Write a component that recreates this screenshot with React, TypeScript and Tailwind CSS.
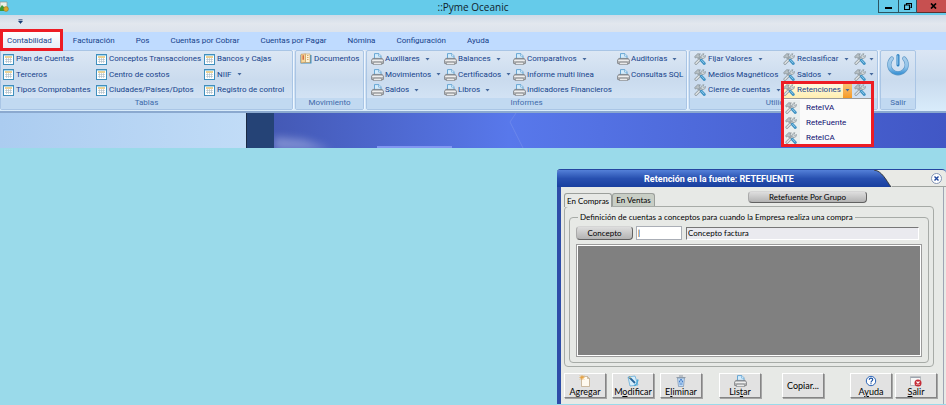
import type { ReactNode } from "react"
import clsx from "clsx"

type IconName = "table" | "printer" | "tools" | "book"

interface RibbonItem {
  label: string
  icon: IconName
  menu?: boolean
  open?: boolean
}

interface RibbonGroup {
  title: string
  width: string
  columns: string
  items: RibbonItem[]
}

const tabs = [
  "Contabilidad",
  "Facturación",
  "Pos",
  "Cuentas por Cobrar",
  "Cuentas por Pagar",
  "Nómina",
  "Configuración",
  "Ayuda",
]

// Items run down each column, three rows at a time
const groups: RibbonGroup[] = [
  {
    title: "Tablas",
    width: "w-[293px]",
    columns: "grid-cols-[93px_108px_88px] pl-[2px]",
    items: [
      { label: "Plan de Cuentas", icon: "table" },
      { label: "Terceros", icon: "table" },
      { label: "Tipos Comprobantes", icon: "table" },
      { label: "Conceptos Transacciones", icon: "table" },
      { label: "Centro de costos", icon: "table" },
      { label: "Ciudades/Países/Dptos", icon: "table" },
      { label: "Bancos y Cajas", icon: "table" },
      { label: "NIIF", icon: "table", menu: true },
      { label: "Registro de control", icon: "table" },
    ],
  },
  {
    title: "Movimiento",
    width: "w-[69px]",
    columns: "grid-cols-[63px] pl-1",
    items: [{ label: "Documentos", icon: "book" }],
  },
  {
    title: "Informes",
    width: "w-[321px]",
    columns: "grid-cols-[73px_69px_104px_68px] pl-1",
    items: [
      { label: "Auxiliares", icon: "printer", menu: true },
      { label: "Movimientos", icon: "printer", menu: true },
      { label: "Saldos", icon: "printer", menu: true },
      { label: "Balances", icon: "printer", menu: true },
      { label: "Certificados", icon: "printer", menu: true },
      { label: "Libros", icon: "printer", menu: true },
      { label: "Comparativos", icon: "printer", menu: true },
      { label: "Informe multi línea", icon: "printer" },
      { label: "Indicadores Financieros", icon: "printer" },
      { label: "Auditorías", icon: "printer", menu: true },
      { label: "Consultas SQL", icon: "printer" },
    ],
  },
  {
    title: "Utilidades",
    width: "w-[189px]",
    columns: "grid-cols-[89px_71px_23px] pl-1",
    items: [
      { label: "Fijar Valores", icon: "tools", menu: true },
      { label: "Medios Magnéticos", icon: "tools" },
      { label: "Cierre de cuentas", icon: "tools", menu: true },
      { label: "Reclasificar", icon: "tools", menu: true },
      { label: "Saldos", icon: "tools", menu: true },
      { label: "Retenciones", icon: "tools", menu: true, open: true },
      { label: "", icon: "tools", menu: true },
      { label: "", icon: "tools", menu: true },
      { label: "", icon: "tools" },
    ],
  },
]

const retenciones = ["ReteIVA", "ReteFuente", "ReteICA"]

function TableIcon() {
  return (
    <svg viewBox="0 0 11 11" className="h-[11px] w-[11px] shrink-0">
      <rect x="0.5" y="0.5" width="10" height="10" fill="#fff" stroke="#3f8fbd" />
      <rect x="1" y="1" width="9" height="1" fill="#a9d6ec" />
      <rect x="2" y="2" width="7" height="2" fill="#ecd294" />
      <path d="M2 5.500h7M2 7.500h7M3.500 4v5M5.500 4v5M7.500 4v5" stroke="#a9bac4" strokeWidth="0.6" />
    </svg>
  )
}

function PrinterIcon() {
  return (
    <svg viewBox="0 0 13 12" className="h-3 w-[13px] shrink-0">
      <path d="M3.500 6V.6h4.300L10 2.800V6z" fill="#d4ecfc" stroke="#4b97cc" strokeWidth="0.8" />
      <path d="M7.600.8v2.300h2.200" fill="#fff" stroke="#4b97cc" strokeWidth="0.6" />
      <path d="M1.800 5.400h9.400l1.200 1.800v3.200H.6V7.200z" fill="#b9babc" stroke="#77797c" strokeWidth="0.8" />
      <path d="M1.200 7.400h10.600" stroke="#f4f4f4" />
      <path d="M2.800 9.200h7.400l.8 2.200H2z" fill="#f3f3f3" stroke="#7d8083" strokeWidth="0.7" />
    </svg>
  )
}

function ToolsIcon() {
  return (
    <svg viewBox="0 0 12 12" className="h-3 w-3 shrink-0">
      <path d="M2 10.300 8 4.300" stroke="#8a9499" strokeWidth="3" strokeLinecap="round" />
      <path d="M2 10.300 8 4.300" stroke="#dfe4e6" strokeWidth="1.600" strokeLinecap="round" />
      <path d="M7 4.700C6.600 2.400 7.900.7 10 .7L8.900 2.500l.9.900 1.700-.9c.2 2.200-1.500 3.300-3.200 3z" fill="#cfd6d9" stroke="#808b91" strokeWidth="0.600" />
      <path d="m4.500 4.500 2.500 2.600" stroke="#949da2" strokeWidth="1.600" />
      <path d="m7.300 7.300 3 3.200" stroke="#3b8fc2" strokeWidth="2.800" strokeLinecap="round" />
      <path d="m7.500 7.200 2.500 2.700" stroke="#9ad5f1" strokeWidth="0.900" strokeLinecap="round" />
      <path d="M.6 3.700 3.700.8l2.700.2L5 2.100l.9 1.500L4 5.400 2.600 4.300l-1 .8z" fill="#b9c1c5" stroke="#7b868c" strokeWidth="0.700" />
    </svg>
  )
}

function BookIcon() {
  return (
    <svg viewBox="0 0 12 12" className="h-3 w-3 shrink-0">
      <path d="M.5 2h11v8.500H.5z" fill="#4391c4" />
      <path d="M1 1.300 5.500.8v8.700l-4.500.4z" fill="#f6d79c" stroke="#c98f48" strokeWidth="0.600" />
      <path d="M5.500 1H10v8.500H5.500z" fill="#fff3d8" stroke="#c59a58" strokeWidth="0.600" />
      <path d="M3.200 2.200v4.500" stroke="#cf5b32" strokeWidth="1.300" />
      <path d="M7 2.500h1.500M7 4.500h1.500M7 6.500h1.500" stroke="#d29a4d" strokeWidth="0.800" />
    </svg>
  )
}

function PowerIcon() {
  return (
    <svg viewBox="0 0 24 24" className="h-6 w-6">
      <defs>
        <linearGradient id="power" x1="0" y1="0" x2="0" y2="1">
          <stop offset="0" stopColor="#a9cdea" />
          <stop offset="0.600" stopColor="#8fc3ea" />
          <stop offset="1" stopColor="#3f95d6" />
        </linearGradient>
      </defs>
      <path d="M5.800 5.500a8.700 8.700 0 1 0 12.400 0" fill="none" stroke="#5c97c6" strokeWidth="4.200" strokeLinecap="round" />
      <path d="M5.800 5.500a8.700 8.700 0 1 0 12.400 0" fill="none" stroke="url(#power)" strokeWidth="3" strokeLinecap="round" />
      <path d="M12 2.500v10" stroke="#d5e8f7" strokeWidth="4.600" strokeLinecap="round" />
      <path d="M12 2.500v9.500" stroke="#2d7fc0" strokeWidth="3" strokeLinecap="round" />
      <path d="M11.700 2.800v8.500" stroke="#7fbbe6" strokeWidth="1.200" strokeLinecap="round" />
    </svg>
  )
}

function Caret() {
  return (
    <svg viewBox="0 0 5 3" className="h-[3px] w-[5px] shrink-0">
      <path d="M0.500 0h4l-2 2.500z" fill="#45689c" />
    </svg>
  )
}

const icons: Record<IconName, ReactNode> = {
  table: <TableIcon />,
  printer: <PrinterIcon />,
  tools: <ToolsIcon />,
  book: <BookIcon />,
}

function RibbonButton({ label, icon, menu, open }: RibbonItem) {
  return (
    <div className={clsx("relative", open && "z-10")}>
      <button
        aria-label={label || "Utilidad"}
        className={clsx(
          "flex h-4 items-center whitespace-nowrap",
          icon === "printer" ? "gap-px" : "gap-[2px]",
          open && "w-[69px] bg-linear-to-b from-[#fffbe6] to-[#ffeeb0]"
        )}
      >
        {icons[icon]}
        {label && <span>{label}</span>}
        {menu && !open && <span className={label ? "pl-1" : "pl-px"}><Caret /></span>}
        {open && (
          <span className="ml-auto flex h-full w-[9px] shrink-0 items-center justify-center bg-linear-to-b from-[#f8c678] to-[#f59b22]">
            <Caret />
          </span>
        )}
      </button>
      {open && (
        <>
          <ul className="absolute top-4 left-0 w-[88px] border-t border-[#9a9a9a] bg-[#fafafa] pt-px">
            {retenciones.map((name) => (
              <li key={name}>
                <button className="flex h-[15px] w-full items-center text-[#0c0c70]">
                  <span className="flex h-full w-[17px] items-center bg-[#e9eeee] pl-[2px]">
                    <ToolsIcon />
                  </span>
                  <span className="pl-[6px]">{name}</span>
                </button>
              </li>
            ))}
          </ul>
          <span className="pointer-events-none absolute -top-px -left-[2px] h-[66px] w-[93px] border-[3px] border-[#ed1c24]" />
        </>
      )}
    </div>
  )
}

function Ribbon() {
  return (
    <div className="flex h-[61px] gap-[2px] bg-linear-to-b from-[#dbe6f4] via-[#c9dbee] to-[#d9ecfb] pb-px text-[8px] leading-[10px] text-[#15428b]">
      {groups.map((group) => (
        <section
          key={group.title}
          className={clsx(
            "flex shrink-0 flex-col rounded-[2px] border border-[#a9c5e5] bg-linear-to-b from-[#dce7f4] via-[#cadbee] to-[#d7e7f8] shadow-[1px_0_0_#eef6ff]",
            group.width
          )}
        >
          <div className={clsx("grid grid-flow-col grid-rows-[16px_15px_16px] items-center", group.columns)}>
            {group.items.map((item, i) => (
              <RibbonButton key={i} {...item} />
            ))}
          </div>
          <h2 className="flex-1 bg-[#c1d9f1] text-center text-[#3e6aaa]">{group.title}</h2>
        </section>
      ))}
      <section className="flex w-9 shrink-0 flex-col rounded-[2px] border border-[#a9c5e5] bg-linear-to-b from-[#dce7f4] via-[#cadbee] to-[#d7e7f8]">
        <button aria-label="Salir" className="flex h-[47px] items-start justify-center pt-[2px]">
          <PowerIcon />
        </button>
        <h2 className="flex-1 bg-[#c1d9f1] text-center text-[#3e6aaa]">Salir</h2>
      </section>
    </div>
  )
}

function TitleBar() {
  return (
    <header className="grid h-[15px] grid-cols-[1fr_auto_1fr] bg-[#65cbea]">
      <svg viewBox="0 0 9 12" className="mt-px h-3 w-[9px]">
        <path d="M0 1h7v8H0z" fill="#eef0e8" stroke="#8c9690" strokeWidth="0.700" />
        <path d="M0 7 2 4l2 2v4H0z" fill="#3c9a38" />
        <circle cx="6" cy="8" r="2.400" fill="#dda92d" stroke="#987422" strokeWidth="0.600" />
      </svg>
      <h1 className="font-['Open_Sans',sans-serif] text-[10px] leading-[15px] text-[#10222a]">::Pyme Oceanic</h1>
      <div className="flex justify-end">
        <button aria-label="Minimizar" className="flex h-[13px] w-[21px] items-center justify-center border-x border-b border-[#2c5562]">
          <span className="mt-[3px] h-[2px] w-[7px] bg-black" />
        </button>
        <button aria-label="Restaurar" className="flex h-[13px] w-[18px] items-center justify-center border-r border-b border-[#2c5562]">
          <svg viewBox="0 0 8 7" className="h-[7px] w-2">
            <path d="M2.500 1.500v-1h5v4h-1M.5 2h5v4.500h-5z" fill="none" stroke="#000" strokeWidth="1.200" />
          </svg>
        </button>
        <button aria-label="Cerrar" className="flex h-[13px] w-[29px] items-center justify-center border-b border-[#5f2f2c] bg-[#c75050] pl-1">
          <svg viewBox="0 0 7 6" className="h-[6px] w-[7px]">
            <path d="m1 .5 5 5M6 .5l-5 5" stroke="#000" strokeWidth="1.700" />
          </svg>
        </button>
      </div>
    </header>
  )
}

function Workspace() {
  return (
    <div className="flex h-[37px] border-t-2 border-[#8ba9cf]">
      <div className="w-[246px] bg-linear-to-r from-[#abccf0] to-[#c1dcf7]" />
      <div className="w-7 border-l border-[#1b2a44] bg-[#254376]" />
      <div className="flex-1 bg-linear-to-r from-[#4459b5] via-[#5878eb] via-35% to-[#4157c5]">
        <svg viewBox="0 0 672 35" className="h-[35px] w-full" preserveAspectRatio="xMinYMin slice">
          <defs>
            <filter id="cloud" x="-50%" y="-50%" width="200%" height="200%">
              <feGaussianBlur stdDeviation="4" />
            </filter>
          </defs>
          <path d="M0 24 30 27l28 10H0z" fill="#a9b4e4" opacity="0.600" filter="url(#cloud)" />
          <path d="m242 0-6 9 13 26" fill="none" stroke="#7d95ee" opacity="0.500" />
          <path d="M103 34h75" stroke="#8197f2" strokeWidth="2" />
        </svg>
      </div>
    </div>
  )
}

function FormButton({ children, label, hotkey = -1 }: { children?: ReactNode; label: string; hotkey?: number }) {
  return (
    <button className="flex h-[25px] w-[42px] shrink-0 flex-col items-center justify-center border border-t-white border-r-[#858585] border-b-[#858585] border-l-white bg-[#e2e2e2] text-[9px] shadow-[1px_1px_0_#a5a5a5]">
      {children}
      <span className="whitespace-nowrap">
        {hotkey < 0 ? (
          label
        ) : (
          <>
            {label.slice(0, hotkey)}
            <u>{label[hotkey]}</u>
            {label.slice(hotkey + 1)}
          </>
        )}
      </span>
    </button>
  )
}

const pill =
  "flex items-center justify-center rounded-[4px] border border-t-[#d5d5d5] border-r-[#626262] border-b-[#626262] border-l-[#aaa] bg-linear-to-b from-[#dedede] to-[#b3b3b3] whitespace-nowrap"

function RetencionDialog() {
  return (
    <section className="mt-[21px] ml-auto w-[389px] rounded-t-[4px] border-l-4 border-[#2d4ca8] bg-[#e7e9e6] font-['Lato',sans-serif] text-[8px] leading-[10px] text-black">
      <div className="-ml-1 flex h-[18px] rounded-t-[4px] border-t border-[#2545a0] bg-[#e9eae6]">
        <div className="flex flex-1 items-center justify-center rounded-tl-[3px] bg-linear-to-b from-[#5480d8] via-[#2850b0] to-[#183f9f] pl-[7px]">
          <h2 className="font-['Roboto',sans-serif] text-[9px] font-bold text-white">Retención en la fuente: RETEFUENTE</h2>
        </div>
        <svg viewBox="0 0 18 17" className="h-[17px] w-[18px]" preserveAspectRatio="none">
          <defs>
            <linearGradient id="caption" x1="0" y1="0" x2="0" y2="1">
              <stop offset="0" stopColor="#5480d8" />
              <stop offset="0.500" stopColor="#2850b0" />
              <stop offset="1" stopColor="#183f9f" />
            </linearGradient>
          </defs>
          <path d="M0 0c8 1 12 10 17 17H0z" fill="url(#caption)" />
          <path d="M0 0c8 1 12 10 17 17" fill="none" stroke="#34383c" />
        </svg>
        <div className="flex w-[54px] items-center justify-end border-b border-[#9fa39f] pr-1">
          <button aria-label="Cerrar" className="flex h-[11px] w-[11px] items-center justify-center rounded-full border border-[#8495b5] bg-white">
            <svg viewBox="0 0 5 5" className="h-[5px] w-[5px]">
              <path d="m.5.5 4 4M4.500.5l-4 4" stroke="#1f479e" strokeWidth="1.400" />
            </svg>
          </button>
        </div>
      </div>

      <div className="mr-[2px] border-r border-[#9fa5b4] pt-[3px] pr-[9px] pb-[6px] pl-[3px]">
        <div className="flex h-4 items-end">
          <div role="tablist" className="flex items-end">
            <button role="tab" aria-selected="true" className="relative top-px h-[14px] w-12 rounded-t-[3px] border border-b-0 border-[#9b9f9b] bg-[#e7e9e6] whitespace-nowrap">
              En Compras
            </button>
            <button role="tab" aria-selected="false" className="h-[13px] w-[43px] rounded-t-[3px] border border-b-0 border-[#9b9f9b] bg-[#c8cec5] whitespace-nowrap">
              En Ventas
            </button>
          </div>
          <button className={clsx(pill, "mr-[67px] mb-[3px] ml-auto h-[12px] w-[119px]")}>Retefuente Por Grupo</button>
        </div>

        <div className="rounded-[4px] border border-[#a7aba7] px-1 pt-[5px] pb-[3px]">
          <fieldset className="rounded-[4px] border border-[#a7aba7] px-[6px] pb-[5px]">
            <legend className="ml-[2px] px-[2px]">
              Definición de cuentas a conceptos para cuando la Empresa realiza una compra
            </legend>
            <div className="mt-1 flex h-[14px] items-center">
              <button className={clsx(pill, "h-[14px] w-[57px]")}>Concepto</button>
              <input
                aria-label="Concepto"
                defaultValue="|"
                className="ml-[3px] h-[14px] w-[46px] border border-[#aaaeb6] bg-white px-px outline-none"
              />
              <input
                aria-label="Concepto factura"
                readOnly
                value="Concepto factura"
                className="mr-[3px] ml-1 h-[13px] min-w-0 flex-1 border border-t-[#777] border-r-white border-b-white border-l-[#777] bg-[#eaeaef] px-px outline-none"
              />
            </div>
            <div className="mt-1 h-[113px] border border-[#9b9b9b] bg-white p-px">
              <div className="h-full bg-[#808080]" />
            </div>
          </fieldset>
        </div>

        <div className="mt-[6px] flex">
          <FormButton label="Agregar" hotkey={1}>
            <svg viewBox="0 0 12 12" className="h-3 w-3">
              <path d="M2.500 1.500h6l2 2v8h-8z" fill="#fffaf0" stroke="#bba383" strokeWidth="0.700" />
              <path d="M8.500 1.500v2h2" fill="none" stroke="#bba383" strokeWidth="0.700" />
              <path d="M3 0v5M.5 2.500h5M1 .5l4 4M5 .5l-4 4" stroke="#eaa13a" strokeWidth="0.800" />
            </svg>
          </FormButton>
          <div className="ml-[6px] flex gap-[6px]">
            <FormButton label="Modificar" hotkey={1}>
              <svg viewBox="0 0 12 12" className="h-3 w-3">
                <path d="m1 2 7-1 3 9-8 1z" fill="#d7eefc" stroke="#55a5d6" strokeWidth="0.700" />
                <path d="m2 2 6 6" stroke="#28659b" strokeWidth="1.800" />
                <path d="M7 10.500c3 0 3-3 4-6" fill="none" stroke="#50abd8" strokeWidth="1.500" />
                <path d="m2.500 2 1 1" stroke="#eed37a" strokeWidth="1.300" />
              </svg>
            </FormButton>
            <FormButton label="Eliminar" hotkey={1}>
              <svg viewBox="0 0 12 12" className="h-3 w-3">
                <path d="m2.500 3 1 8.500h5l1-8.500z" fill="#bfdbf5" stroke="#7b91ad" strokeWidth="0.700" />
                <path d="M1.500 2.500h9M4 1h4" stroke="#8f9ba8" />
                <path d="m6 4-1.800 3h1.300M6 4l1.800 3H6.500M4.500 9h3" fill="none" stroke="#3a74c5" strokeWidth="0.900" />
              </svg>
            </FormButton>
          </div>
          <div className="ml-[17px]">
            <FormButton label="Listar" hotkey={3}>
              <PrinterIcon />
            </FormButton>
          </div>
          <div className="ml-[21px]">
            <FormButton label="Copiar..." />
          </div>
          <div className="-mr-[3px] ml-auto flex gap-[3px]">
            <FormButton label="Ayuda" hotkey={1}>
              <svg viewBox="0 0 12 12" className="h-3 w-3">
                <circle cx="6" cy="6" r="4.700" fill="#fff" stroke="#2963b6" />
                <path d="M4.300 4.700C4.300 2.600 7.700 2.700 7.700 4.600 7.700 6 6 5.800 6 7.400M6 8.300v1" fill="none" stroke="#174fa3" strokeWidth="1.200" />
              </svg>
            </FormButton>
            <FormButton label="Salir" hotkey={0}>
              <svg viewBox="0 0 12 12" className="h-3 w-3">
                <path d="M.5 1.500h10v9H.5z" fill="#f6f6f6" stroke="#a8acb0" strokeWidth="0.700" />
                <path d="M.5 2.500h10" stroke="#9da4af" />
                <circle cx="8" cy="8" r="3.500" fill="#c52b36" />
                <path d="m6.500 6.500 3 3m0-3-3 3" stroke="#fff" strokeWidth="1.100" />
              </svg>
            </FormButton>
          </div>
        </div>
      </div>
    </section>
  )
}

export default function App() {
  return (
    <main className="min-h-screen overflow-hidden bg-[#9adaea] font-['Roboto',sans-serif]">
      <TitleBar />
      <div className="flex h-[17px] items-center bg-linear-to-b from-[#cfdae7] via-[#e2e7ee] to-[#dce3ec] pb-[5px] pl-[18px]">
        <button aria-label="Personalizar" className="flex">
          <svg viewBox="0 0 5 5" className="h-[5px] w-[5px]">
            <path d="M.5.500h4M.5 2h4l-2 2.500z" fill="#173b72" stroke="#173b72" strokeWidth="0.600" />
          </svg>
        </button>
      </div>
      <nav className="flex h-[18px] gap-[21px] bg-[#bfdbff] pl-[7px] text-[8px] leading-[10px] whitespace-nowrap text-[#15428b]">
        {tabs.map((tab, i) =>
          i === 0 ? (
            <button key={tab} className="relative -mr-2 -ml-1 bg-linear-to-b from-white to-[#e4edf8] pr-2 pl-1">
              {tab}
              <span className="pointer-events-none absolute -inset-x-[3px] -top-[3px] h-[22px] border-[3px] border-[#ed1c24]" />
            </button>
          ) : (
            <button key={tab}>{tab}</button>
          )
        )}
      </nav>
      <Ribbon />
      <Workspace />
      <RetencionDialog />
    </main>
  )
}
